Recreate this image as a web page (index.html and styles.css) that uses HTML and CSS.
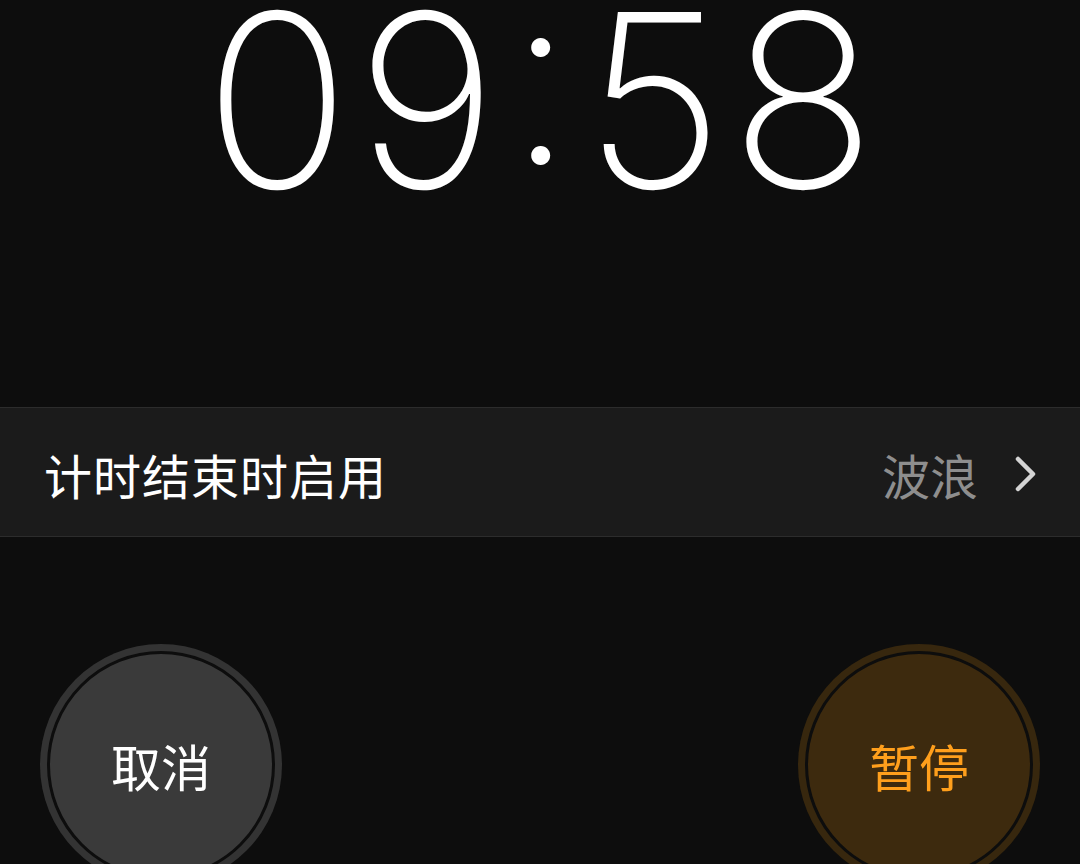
FILE: index.html
```html
<!DOCTYPE html>
<html lang="zh-CN">
<head>
<meta charset="utf-8">
<link rel="stylesheet" href="styles.css">
</head>
<body>
<div class="screen">
  <section class="timer">
    <div class="digits">09<span class="colon">:</span>58</div>
  </section>
  <div class="row">
    <span class="row-label">计时结束时启用</span>
    <span class="row-value">波浪
      <svg class="chev" width="24" height="36" viewBox="0 0 24 36"><path d="M4 3 L19 18 L4 33" fill="none" stroke="#d4d4d4" stroke-width="4.5" stroke-linecap="round" stroke-linejoin="round"/></svg>
    </span>
  </div>
  <div class="buttons">
    <div class="btn btn-cancel"><div class="btn-inner">取消</div></div>
    <div class="btn btn-pause"><div class="btn-inner">暂停</div></div>
  </div>
</div>
</body>
</html>
```
FILE: styles.css
```css
html, body {
  margin: 0;
  padding: 0;
  background: #0d0d0d;
}
.screen {
  width: 1080px;
  height: 864px;
  overflow: hidden;
  display: flex;
  flex-direction: column;
  font-family: "Noto Sans CJK SC", "Noto Sans", sans-serif;
}
.screen > * {
  flex-shrink: 0;
}
.timer {
  height: 407px;
  display: flex;
  justify-content: center;
  overflow: hidden;
}
.digits {
  font-family: Inter, "Noto Sans", sans-serif;
  font-weight: 200;
  font-size: 242px;
  line-height: 1;
  color: #fff;
  margin-top: -45px;
  letter-spacing: 6px;
  padding-left: 6px;
}
.colon {
  vertical-align: 24px;
  margin: 0 4px;
}
.row {
  height: 128px;
  background: #1b1b1b;
  border-top: 1px solid #2c2c2c;
  border-bottom: 1px solid #2c2c2c;
  display: flex;
  align-items: center;
  justify-content: space-between;
  padding: 0 42px 0 44px;
}
.row-label {
  color: #fff;
  font-size: 48px;
  letter-spacing: 1px;
  margin-top: 4px;
}
.row-value {
  color: #8e8e8e;
  font-size: 48px;
  display: flex;
  align-items: center;
  gap: 36px;
  margin-top: 4px;
}
.buttons {
  display: flex;
  justify-content: space-between;
  padding: 107px 40px 0 40px;
}
.btn {
  width: 242px;
  height: 242px;
  border-radius: 50%;
  box-sizing: border-box;
  padding: 7px;
  display: flex;
}
.btn-inner {
  flex: 1;
  border-radius: 50%;
  display: flex;
  align-items: center;
  justify-content: center;
  font-size: 50px;
  border: 3px solid #0d0d0d;
}
.btn-cancel {
  background: #333333;
}
.btn-cancel .btn-inner {
  background: #3a3a3a;
  color: #fff;
}
.btn-pause {
  background: #37270e;
}
.btn-pause .btn-inner {
  background: #3d2a0e;
  color: #ff9f1c;
}
```
